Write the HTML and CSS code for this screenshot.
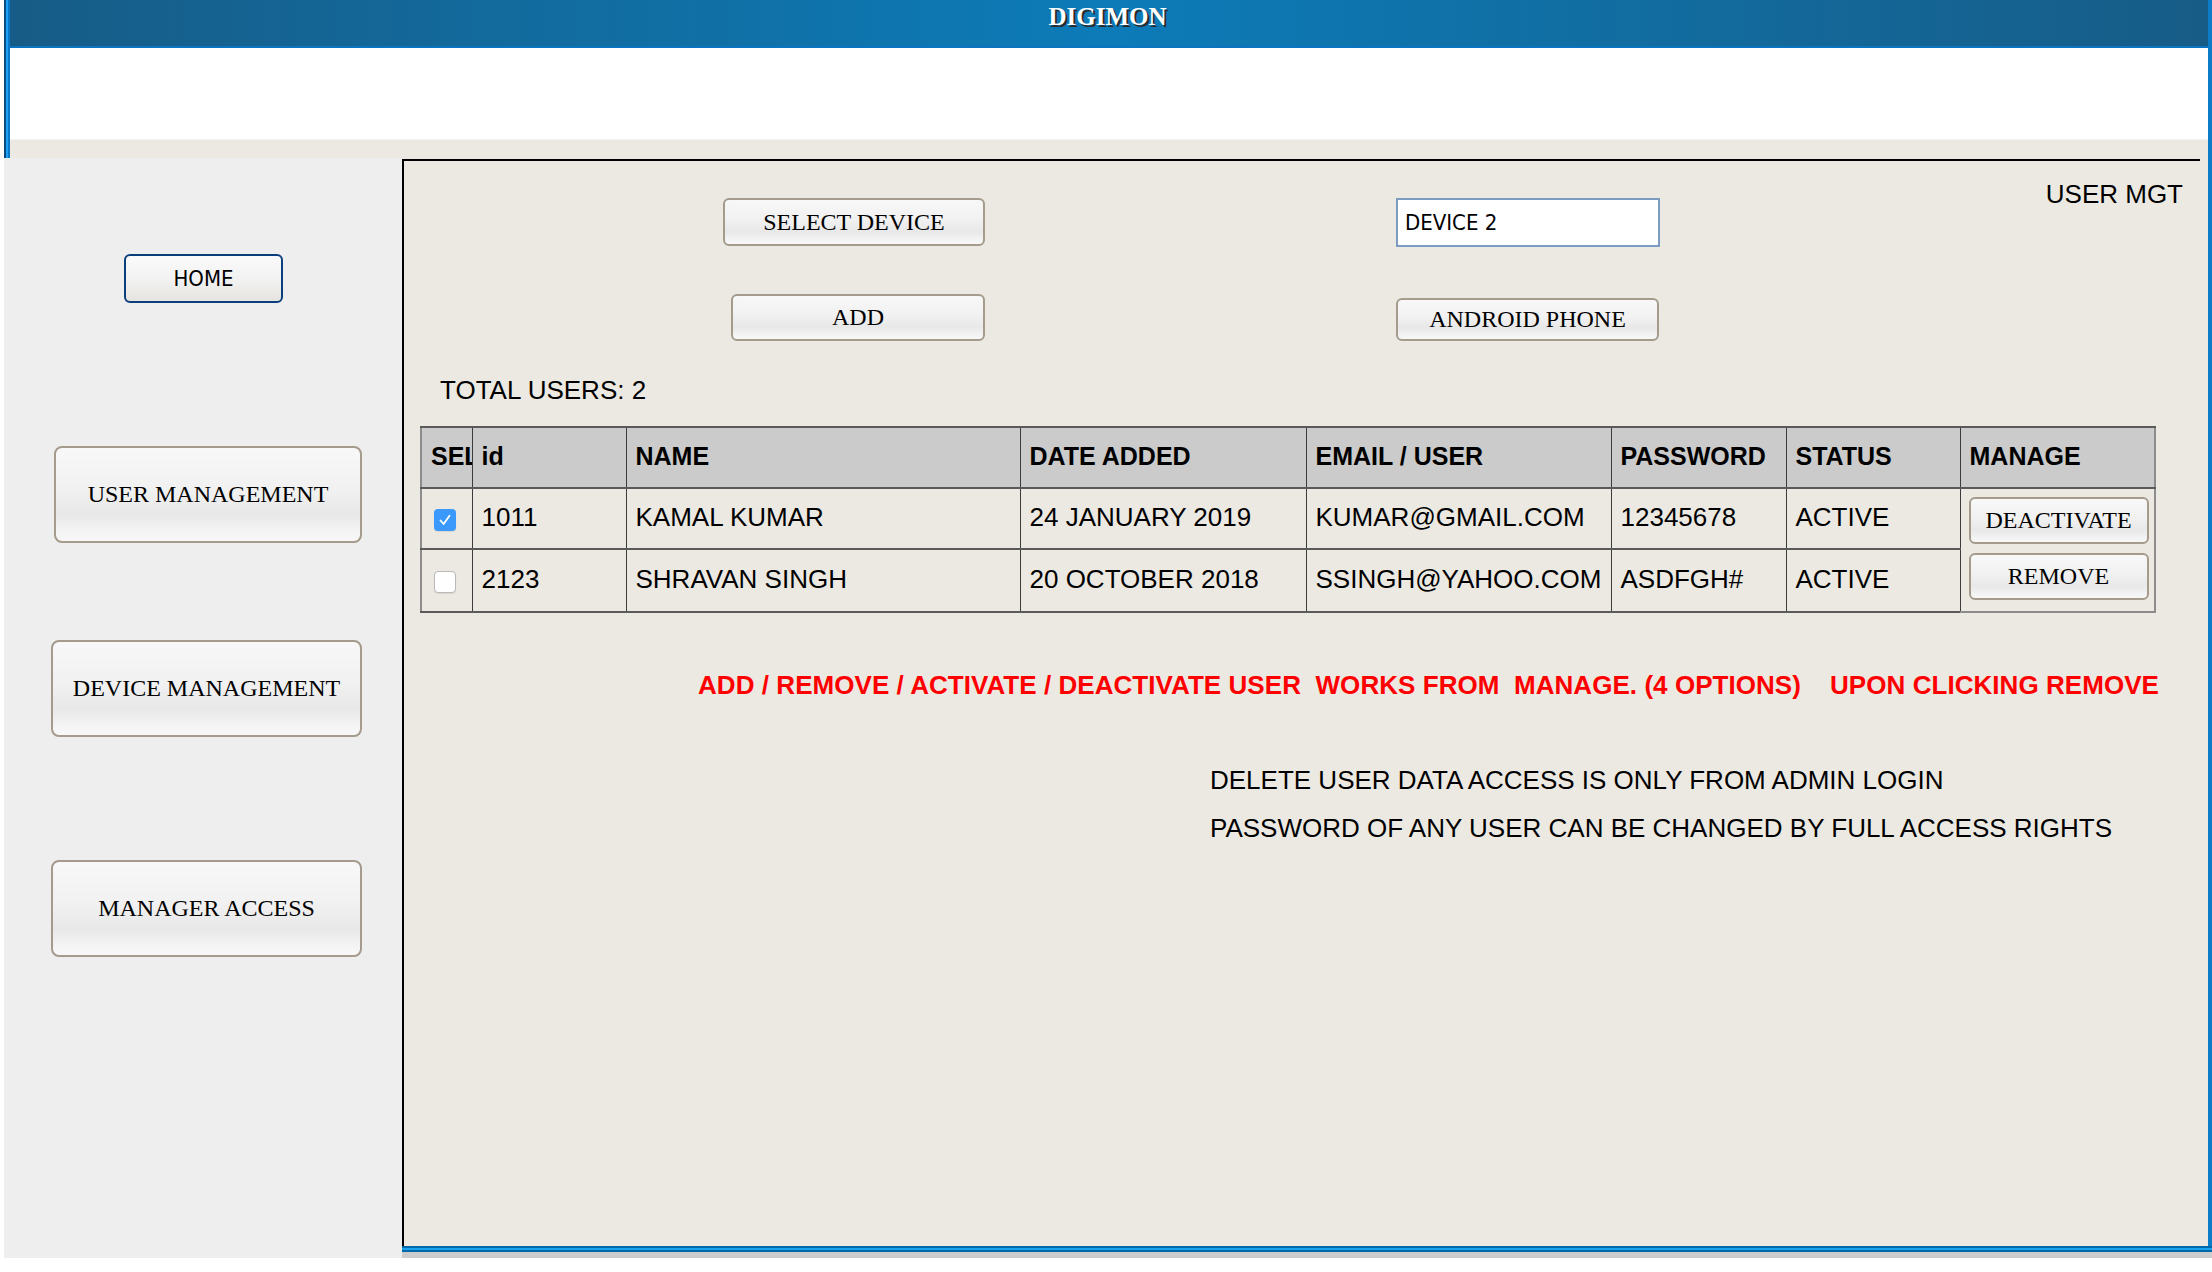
FILE: index.html
```html
<!DOCTYPE html>
<html lang="en">
<head>
<meta charset="utf-8">
<title>DIGIMON</title>
<link rel="stylesheet" href="styles.css">
</head>
<body>
<div class="top">
  <div class="edge-left"></div>
  <div class="top-content">
    <header class="titlebar"><span class="title">DIGIMON</span></header>
    <div class="banner"></div>
    <div class="strip"></div>
  </div>
  <div class="edge-right"></div>
</div>
<div class="body">
  <aside class="sidebar">
    <button class="btn-home">HOME</button>
    <button class="btn-nav nav-user">USER MANAGEMENT</button>
    <button class="btn-nav nav-device">DEVICE MANAGEMENT</button>
    <button class="btn-nav nav-manager">MANAGER ACCESS</button>
  </aside>
  <div class="main">
    <div class="main-inner">
      <section class="panel">
        <div class="controls">
          <div class="col1">
            <button class="btn btn-select">SELECT DEVICE</button>
            <button class="btn btn-add">ADD</button>
          </div>
          <div class="col2">
            <input class="device-input" type="text" value="DEVICE 2" readonly>
            <button class="btn btn-android">ANDROID PHONE</button>
          </div>
          <div class="usermgt">USER MGT</div>
        </div>
        <div class="total">TOTAL USERS: 2</div>
        <table class="users">
          <colgroup>
            <col class="c-sel"><col class="c-id"><col class="c-name"><col class="c-date">
            <col class="c-email"><col class="c-pass"><col class="c-status"><col class="c-manage">
          </colgroup>
          <thead>
            <tr>
              <th>SEL</th><th>id</th><th>NAME</th><th>DATE ADDED</th>
              <th>EMAIL / USER</th><th>PASSWORD</th><th>STATUS</th><th>MANAGE</th>
            </tr>
          </thead>
          <tbody>
            <tr class="r1">
              <td class="sel"><span class="cb checked"><svg viewBox="0 0 22 22" width="22" height="22"><path d="M6.5 11.5 L9.6 15 L15.5 6.8" fill="none" stroke="#fff" stroke-width="1.8" stroke-linecap="round" stroke-linejoin="round"/></svg></span></td>
              <td>1011</td><td>KAMAL KUMAR</td><td>24 JANUARY 2019</td>
              <td>KUMAR@GMAIL.COM</td><td>12345678</td><td>ACTIVE</td>
              <td class="manage" rowspan="2">
                <button class="btn btn-small">DEACTIVATE</button>
                <button class="btn btn-small">REMOVE</button>
              </td>
            </tr>
            <tr class="r2">
              <td class="sel"><span class="cb"></span></td>
              <td>2123</td><td>SHRAVAN SINGH</td><td>20 OCTOBER 2018</td>
              <td>SSINGH@YAHOO.COM</td><td>ASDFGH#</td><td>ACTIVE</td>
            </tr>
          </tbody>
        </table>
        <p class="note-red">ADD / REMOVE / ACTIVATE / DEACTIVATE USER  WORKS FROM  MANAGE. (4 OPTIONS)    UPON CLICKING REMOVE</p>
        <p class="note">DELETE USER DATA ACCESS IS ONLY FROM ADMIN LOGIN</p>
        <p class="note note2">PASSWORD OF ANY USER CAN BE CHANGED BY FULL ACCESS RIGHTS</p>
      </section>
    </div>
    <div class="bars"></div>
    <div class="shade"></div>
  </div>
</div>
</body>
</html>
```
FILE: styles.css
```css
* { box-sizing: border-box; }
html, body { margin: 0; padding: 0; background: #ffffff; }
body { width: 2212px; height: 1272px; overflow: hidden; font-family: "Liberation Sans", Arial, sans-serif; color: #000; }

/* ---------- top frame ---------- */
.top { display: flex; margin-left: 4px; }
.edge-left { width: 6px; background: linear-gradient(to right, #0b4c80 0 2px, #1ea0f5 2px 4px, #0a78c8 4px 6px); }
.edge-right { width: 4px; background: #0a7cc8; }
.top-content { flex: 1; display: flex; flex-direction: column; }
.titlebar {
  height: 48px;
  border-bottom: 2px solid #0a74c0;
  background: linear-gradient(to right, #175c87 0%, #126c9f 25%, #0c7bb8 50%, #126c9f 75%, #175c87 100%);
  text-align: center;
  padding-top: 3px;
  padding-right: 3px;
}
.title {
  font-family: "Liberation Serif", "Times New Roman", serif;
  font-weight: bold;
  font-size: 25px;
  line-height: 28px;
  color: #ffffff;
  text-shadow: 2px 2px 0 #2a2a2a;
}
.banner { height: 91px; background: #ffffff; }
.strip { height: 19px; background: #ece9e2; border-top: 1px solid #f4f2ee; }

/* ---------- body ---------- */
.body { display: flex; height: 1100px; }
.sidebar {
  margin-left: 4px;
  width: 398px;
  background: #eeeeee;
  display: flex;
  flex-direction: column;
  align-items: flex-start;
}
.btn-home {
  margin-top: 96px;
  margin-left: 120px;
  width: 159px;
  height: 49px;
  border: 2px solid #0b3e7c;
  border-radius: 6px;
  background: linear-gradient(to bottom, #fafafa 0%, #f1f1f1 55%, #e6e4df 100%);
  font-family: "DejaVu Sans Condensed", "DejaVu Sans", sans-serif;
  font-stretch: condensed;
  font-size: 22px;
  color: #000;
  padding: 0;
}
.btn-nav {
  width: 311px;
  height: 97px;
  border: 2px solid #a49b8c;
  border-radius: 8px;
  background: linear-gradient(to bottom, #f8f8f8 0%, #f1f1f1 45%, #e8e8e8 72%, #f3f3f3 88%, #f8f8f8 100%);
  font-family: "Liberation Serif", "Times New Roman", serif;
  font-size: 24px;
  color: #000;
  padding: 0;
}
.nav-user { margin-top: 143px; margin-left: 50px; width: 308px; }
.nav-device { margin-top: 97px; margin-left: 47px; }
.nav-manager { margin-top: 123px; margin-left: 47px; }

.main { width: 1810px; display: flex; flex-direction: column; }
.main-inner {
  flex: 1;
  display: flex;
  background: #ece9e2;
  border-right: 4px solid #0a7cc8;
  padding-top: 1px;
}
.panel {
  flex: 1;
  margin-right: 8px;
  border-top: 2px solid #000;
  border-left: 2px solid #000;
}
.bars { height: 6px; background: linear-gradient(to bottom, #0068a8 0 2px, #19a2ee 2px 4px, #0068a8 4px 6px); }
.shade { height: 6px; background: #cccccc; }

/* ---------- controls ---------- */
.controls { display: flex; align-items: flex-start; padding-top: 37px; padding-left: 319px; }
.col1 { width: 262px; display: flex; flex-direction: column; align-items: flex-end; gap: 48px; }
.col2 { margin-left: 411px; width: 264px; display: flex; flex-direction: column; gap: 51px; }
.btn {
  border: 2px solid #a49b8c;
  border-radius: 6px;
  background: linear-gradient(to bottom, #f8f8f8 0%, #f1f1f1 45%, #e8e8e8 72%, #f3f3f3 90%, #f8f8f8 100%);
  font-family: "Liberation Serif", "Times New Roman", serif;
  font-size: 24px;
  color: #000;
  padding: 0;
}
.btn-select { width: 262px; height: 48px; }
.btn-add { width: 254px; height: 47px; }
.btn-android { width: 263px; height: 43px; }
.device-input {
  width: 264px;
  height: 49px;
  border: 2px solid #7b9bc1;
  background: #ffffff;
  padding: 0 0 0 7px;
  font-family: "DejaVu Sans Condensed", "DejaVu Sans", sans-serif;
  font-stretch: condensed;
  font-size: 22px;
  color: #000;
  outline: none;
}
.usermgt { margin-left: auto; margin-right: 17px; margin-top: -19px; font-size: 26px; line-height: normal; }

.total { margin-top: 34px; margin-left: 36px; font-size: 26px; line-height: 30px; }

/* ---------- table ---------- */
.users {
  margin-top: 21px;
  margin-left: 16px;
  width: 1734px;
  table-layout: fixed;
  border-collapse: collapse;
  border: 2px solid #8c8c8c;
}
.c-sel { width: 51px; } .c-id { width: 154px; } .c-name { width: 394px; } .c-date { width: 286px; }
.c-email { width: 305px; } .c-pass { width: 175px; } .c-status { width: 174px; } .c-manage { width: 195px; }
.users th, .users td {
  border-left: 1px solid #3c3c3c;
  border-right: 1px solid #3c3c3c;
  border-top: 2px solid #5a5a5a;
  border-bottom: 2px solid #5a5a5a;
  padding: 0 0 0 9px;
  text-align: left;
  vertical-align: middle;
  white-space: nowrap;
  overflow: hidden;
}
.users th { background: #cbcbcb; font-size: 25px; font-weight: bold; height: 61px; padding-bottom: 2px; }
.users td { font-size: 26px; padding-bottom: 2px; }
.users tr.r1 td { height: 61px; }
.users tr.r2 td { height: 63px; }
.users td.sel { padding-left: 12px; padding-bottom: 0; }
.cb {
  display: inline-block;
  width: 22px;
  height: 22px;
  border-radius: 4px;
  vertical-align: middle;
  background: #ffffff;
  border: 1px solid #b9b9b9;
  box-shadow: 0 1px 1px rgba(0,0,0,0.08);
}
.cb svg { display: block; }
.cb.checked { background: #3b99fc; border: none; }
.users td.manage { vertical-align: top; padding: 8px 0 0 8px; border-bottom: 2px solid #8c8c8c; }
.btn-small { display: block; width: 180px; height: 47px; font-size: 24px; }
.btn-small + .btn-small { margin-top: 9px; }

/* ---------- notes ---------- */
.note-red {
  margin: 57px 0 0 294px;
  white-space: pre;
  font-size: 26px;
  font-weight: bold;
  color: #ff0000;
  line-height: normal;
  letter-spacing: 0.05px;
}
.note { margin: 64px 0 0 806px; font-size: 26px; line-height: normal; white-space: pre; }
.note2 { margin-top: 17px; }
```
